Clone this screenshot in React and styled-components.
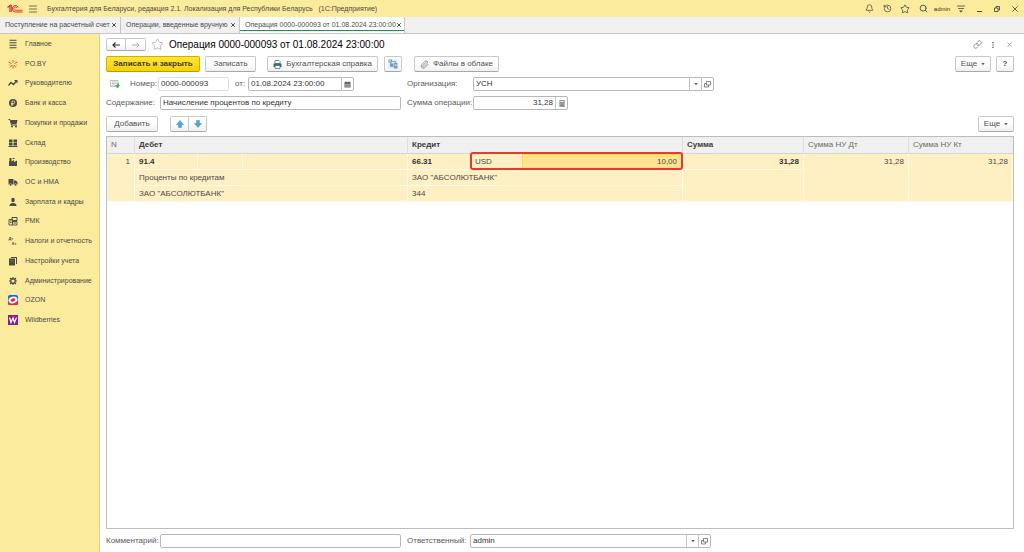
import styled, { createGlobalStyle } from "styled-components"
import { Bell, History, Star, Search, Link, Paperclip, X } from "lucide-react"

const GlobalStyle = createGlobalStyle`
  * {
    box-sizing: border-box;
  }

  body {
    margin: 0;
    background: #ffffff;
    color: #4a4a4a;
    font-family: "Liberation Sans", Arial, sans-serif;
    font-size: 8px;
    line-height: 10px;
  }

  button, input {
    font: inherit;
    color: inherit;
    margin: 0;
  }
`

const Page = styled.div`
  display: flex;
  flex-direction: column;
  min-height: 100vh;
`

const TopBar = styled.header`
  display: flex;
  align-items: center;
  height: 17px;
  padding-left: 7px;
  background: #fbeb9c;
  font-size: 7px;
`

const AppTitle = styled.span`
  flex: 1;
  margin-left: 4px;
  white-space: pre;
`

const IconButton = styled.button`
  display: flex;
  align-items: center;
  justify-content: center;
  width: ${(props) => props.$width || 18}px;
  height: 12px;
  padding: 0;
  border: 0;
  background: none;
  color: ${(props) => props.$color || "#4a4a4a"};
`

const UserLink = styled.a`
  width: 20px;
  color: #333333;
  font-size: 6px;
  text-align: center;
  text-decoration: none;
`

const Tabs = styled.nav`
  display: flex;
  height: 17px;
  background: #f0f0f0;
  border-bottom: 1px solid #c6c6c6;
  font-size: 7px;
`

const Tab = styled.div`
  display: flex;
  align-items: center;
  justify-content: space-between;
  width: ${(props) => props.$width}px;
  padding: 0 2px 0 5px;
  border-right: 1px solid #c6c6c6;
  background: ${(props) => (props.$active ? "#ffffff" : "transparent")};
  box-shadow: ${(props) => (props.$active ? "inset 0 -2px #ffffff, inset 0 -3px #0c9a50" : "none")};
  white-space: nowrap;
`

const TabLink = styled.a`
  color: inherit;
  text-decoration: none;
`

const Body = styled.div`
  display: flex;
  flex: 1;
`

const Sidebar = styled.nav`
  width: 100px;
  background: #fbeb9c;
  border-right: 1px solid #dccf8c;
`

const Menu = styled.ul`
  display: grid;
  grid-auto-rows: 1fr;
  height: 296px;
  margin: 0;
  padding: 0;
  list-style: none;
`

const MenuLink = styled.a`
  display: flex;
  align-items: center;
  gap: 7px;
  height: 100%;
  padding-left: 8px;
  color: #4a4a4a;
  font-size: 7px;
  text-decoration: none;
  white-space: nowrap;

  svg {
    width: 10px;
    height: 10px;
  }
`

const Main = styled.main`
  display: flex;
  flex: 1;
  flex-direction: column;
  min-width: 0;
  padding: 4px 10px 4px 6px;
`

const Row = styled.div`
  display: flex;
  align-items: center;
  gap: ${(props) => props.$gap || 0}px;
  margin-bottom: ${(props) => props.$bottom || 0}px;
`

const Spacer = styled.div`
  flex: 1;
`

const Heading = styled.h1`
  margin: 0;
  color: #000000;
  font-size: 10px;
  font-weight: normal;
  line-height: 13px;
`

const Button = styled.button`
  display: flex;
  align-items: center;
  justify-content: center;
  gap: 4px;
  width: ${(props) => props.$width}px;
  height: ${(props) => props.$height || 16}px;
  padding: 0;
  border: 1px solid ${(props) => (props.$primary ? "#d0b000" : "#c8c8c8")};
  border-bottom-color: ${(props) => (props.$primary ? "#b89c00" : "#a8a8a8")};
  border-radius: 2px;
  background: ${(props) =>
    props.$primary ? "linear-gradient(#ffe43c, #f6d200)" : "linear-gradient(#ffffff 40%, #f0f0f0)"};
  color: ${(props) => (props.$primary ? "#3c3c3c" : "#505050")};
  font-weight: ${(props) => (props.$primary ? "bold" : "normal")};
  white-space: nowrap;
`

const ButtonPair = styled.div`
  display: flex;

  button:first-child {
    border-radius: 2px 0 0 2px;
  }

  button:last-child {
    margin-left: -1px;
    border-radius: 0 2px 2px 0;
  }
`

const FormRow = styled.div`
  display: grid;
  grid-template-columns: 295px 1fr;
  column-gap: 6px;
  margin-bottom: ${(props) => props.$bottom || 0}px;
`

const FormCell = styled.div`
  display: flex;
  align-items: center;
`

const Status = styled.span`
  display: flex;
  width: 24px;
  padding-left: 4px;
`

const Label = styled.label`
  width: ${(props) => props.$width}px;
  padding-left: ${(props) => props.$indent || 0}px;
  color: #5a5a5a;
  white-space: nowrap;
`

const Field = styled.div`
  display: flex;
  width: ${(props) => props.$width}px;
  height: 14px;
  border: 1px solid ${(props) => (props.$light ? "#dddddd" : "#b8b8b8")};
  border-radius: 2px;
  background: #ffffff;
`

const Input = styled.input`
  flex: 1;
  min-width: 0;
  padding: 0 2px;
  border: 0;
  background: none;
  outline: none;
  color: #333333;
  text-align: ${(props) => (props.$right ? "right" : "left")};
`

const FieldButton = styled.button`
  display: flex;
  align-items: center;
  justify-content: center;
  width: 12px;
  padding: 0;
  border: 0;
  border-left: 1px solid #c4c4c4;
  background: none;
`

const TableBox = styled.div`
  flex: 1;
  margin-bottom: 5px;
  border: 1px solid #bdbdbd;
`

const Table = styled.table`
  width: 100%;
  table-layout: fixed;
  border-collapse: separate;
  border-spacing: 0;
`

const HeadCell = styled.th`
  height: 17px;
  padding: 0 4px;
  border-right: 1px solid #dddddd;
  border-bottom: 1px solid #d4d4d4;
  background: #f0f0f0;
  color: ${(props) => (props.$bold ? "#3c3c3c" : "#6a6a6a")};
  font-weight: ${(props) => (props.$bold ? "bold" : "normal")};
  text-align: left;

  &:last-child {
    border-right: 0;
  }
`

const Cell = styled.td`
  height: 16px;
  padding: 0 4px;
  border-right: 1px solid ${(props) => (props.$seamless ? "#fff0c4" : "#fffaeb")};
  border-bottom: 1px solid #fffaeb;
  background: #fff0c4;
  font-weight: ${(props) => (props.$bold ? "bold" : "normal")};
  text-align: ${(props) => (props.$right ? "right" : "left")};
  vertical-align: ${(props) => (props.$top ? "top" : "middle")};
  line-height: ${(props) => (props.$top ? 16 : 10)}px;
  color: ${(props) => (props.$bold ? "#333333" : "#4a4a4a")};
`

const AmountCell = styled(Cell)`
  position: relative;
  padding: 0;
`

const Amount = styled.div`
  display: flex;
  height: 15px;
`

const Currency = styled.span`
  width: 51px;
  padding: 3px 4px;
`

const AmountInput = styled(Input)`
  padding: 0 4px;
  border: 1px solid #ffdf28;
  background: #ffe390;
  color: #4a4a4a;
`

const RedFrame = styled.div`
  position: absolute;
  inset: -2px -1px -1px -1px;
  border: 2px solid #e53935;
  border-radius: 3px;
  pointer-events: none;
`

const Caret = () => (
  <svg width="4" height="3" viewBox="0 0 4 3"><path d="M.3 0h3.400L2 2.300z" fill="#5a5a5a" /></svg>
)

const OpenIcon = () => (
  <svg width="7" height="7" viewBox="0 0 14 14" fill="none" stroke="#6a6a6a" strokeWidth="1.6">
    <path d="M5 1h8v7H5zM5 5H1v7h8V8" />
  </svg>
)

const CalendarIcon = () => (
  <svg width="7" height="7" viewBox="0 0 14 14">
    <path d="M1 2h12v11H1z" fill="#666666" />
    <path d="M3 6h8v5H3z" fill="#dddddd" />
    <path d="M4 0v3M10 0v3M3 8.5h8M5.7 6v5M8.3 6v5" stroke="#666666" strokeWidth="1.2" />
  </svg>
)

const CalcIcon = () => (
  <svg width="6" height="7" viewBox="0 0 14 16">
    <path d="M1 0h12v16H1z" fill="#808080" />
    <path d="M3 2h8v3H3z" fill="#eeeeee" />
    <path d="M3 8h8M3 11h8M3 14h8" stroke="#cccccc" strokeWidth="1.4" strokeDasharray="2 1" />
  </svg>
)

const Logo = () => (
  <svg width="16" height="9" viewBox="0 0 32 18" fill="none" stroke="#d9302c">
    <path d="M1 7l5-4v13" strokeWidth="2.600" />
    <path d="M6 4l3-2v14" strokeWidth="1.600" />
    <path d="M23 7a6.500 6.500 0 1 0-6 9h14" strokeWidth="2" />
    <path d="M20 8a3.400 3.400 0 1 0-3 4.500h14" strokeWidth="1.800" />
  </svg>
)

const BurgerIcon = () => (
  <svg width="8" height="8" viewBox="0 0 8 8"><path d="M0 1h8M0 4h8M0 7h8" stroke="#5a5636" strokeWidth=".8" /></svg>
)

const SettingsIcon = () => (
  <svg width="8" height="8" viewBox="0 0 16 16">
    <path d="M0 2h16M2 7h12" stroke="#4a4a4a" strokeWidth="1.6" />
    <path d="M4 11h8l-4 4z" fill="#4a4a4a" />
  </svg>
)

const MinimizeIcon = () => (
  <svg width="5" height="8" viewBox="0 0 5 8"><path d="M0 6.5h5" stroke="#4a4a4a" /></svg>
)

const RestoreIcon = () => (
  <svg width="6" height="6" viewBox="0 0 12 12" fill="none" stroke="#4a4a4a" strokeWidth="1.8">
    <path d="M1 4h7v7H1zM4 4V1h7v7H8" />
  </svg>
)

const DotsIcon = () => (
  <svg width="2" height="6" viewBox="0 0 2 6"><path d="M.3 0h1.400v1.200H.3zM.3 2.400h1.400v1.200H.3zM.3 4.800h1.400V6H.3z" fill="#555555" /></svg>
)

const HistoryArrow = ({ back }) => (
  <svg width="8" height="6" viewBox="0 0 16 12" fill="none" stroke={back ? "#333333" : "#999999"} strokeWidth={back ? 2.4 : 1.6}>
    {back ? <path d="M7 1L2 6l5 5M2 6h14" /> : <path d="M9 1l5 5-5 5M14 6H0" />}
  </svg>
)

const BlueArrow = ({ down }) => (
  <svg width="8" height="8" viewBox="0 0 16 16">
    <path
      d={down ? "M5 1h6v6h4l-7 8-7-8h4z" : "M5 15h6V9h4L8 1 1 9h4z"}
      fill="#4fa5e2"
      stroke="#3d8ecb"
    />
  </svg>
)

const PrinterIcon = () => (
  <svg width="9" height="9" viewBox="0 0 18 18">
    <path d="M4 1h8l2 2v4H4z" fill="#ffffff" stroke="#4d6d8c" strokeWidth="1.6" />
    <path d="M1 7h16v7H1z" fill="#41627f" />
    <path d="M4 11h10v6H4z" fill="#ffffff" stroke="#41627f" strokeWidth="1.4" />
  </svg>
)

const StructureIcon = () => (
  <svg width="10" height="10" viewBox="0 0 20 20">
    <path d="M1 1h18v18H1z" fill="#dbe9f5" />
    <path d="M5 6v9h9M8 5h7v4" fill="none" stroke="#6f9cc3" strokeWidth="1.6" />
    <path d="M1 1h7v6H1zM12 8h7v5h-7zM12 14h7v5h-7zM5 9h6v5H5z" fill="#6f9cc3" />
    <path d="M3 3h3v2H3zM14 10h3v1h-3z" fill="#ffffff" />
  </svg>
)

const PostedIcon = () => (
  <svg width="10" height="9" viewBox="0 0 20 18">
    <path d="M1 1h15v12H1z" fill="#f2f2f2" stroke="#a8a8a8" strokeWidth="1.4" />
    <path d="M4 4h9M4 7h9M4 10h6" stroke="#b0b0b0" strokeWidth="1.2" />
    <path d="M10 10h4V7h4v3h2l-4 6h-2z" fill="#4fae62" />
  </svg>
)

const dark = "#4a4a4a"

const menu = [
  { title: "Главное", icon: <path d="M3 2.500h14M3 7.500h14M3 12.500h14M3 17.500h14" stroke={dark} strokeWidth="2.400" /> },
  {
    title: "PO.BY",
    icon: (
      <>
        <path d="M10 2v5M10 13v6M1 6l6 3M19 6l-6 3M4 17l4-5M16 17l-4-5" stroke="#dc4b33" strokeWidth="1.800" />
        <path d="M4 3l2 2M16 3l-2 2M1 12h4M15 12h4" stroke="#e8803c" strokeWidth="1.400" />
      </>
    ),
  },
  {
    title: "Руководителю",
    icon: (
      <>
        <path d="M1 15l5-6 5 4 6-7" fill="none" stroke={dark} strokeWidth="2.600" />
        <path d="M12 4h7v7z" fill={dark} />
      </>
    ),
  },
  {
    title: "Банк и касса",
    icon: (
      <>
        <circle cx="10" cy="10" r="8" fill={dark} />
        <path d="M8 16V6h3a2.500 2.500 0 0 1 0 5H6M6 13.500h5" fill="none" stroke="#fbeb9c" strokeWidth="1.600" />
      </>
    ),
  },
  {
    title: "Покупки и продажи",
    icon: (
      <>
        <path d="M1 3h3l3 11h11" fill="none" stroke={dark} strokeWidth="2" />
        <path d="M5 4h14l-2 8H7z" fill={dark} />
        <circle cx="8" cy="17" r="2" fill={dark} />
        <circle cx="16" cy="17" r="2" fill={dark} />
      </>
    ),
  },
  { title: "Склад", icon: <path d="M2 3h7v6H2zM11 3h7v6h-7zM2 10h7v5H2zM11 10h7v5h-7zM1 16h18v2H1z" fill={dark} /> },
  { title: "Производство", icon: <path d="M2 18V8h1V2h4v7l5-3v4l6-3v11zM9 2h4v2H9z" fill={dark} /> },
  {
    title: "ОС и НМА",
    icon: (
      <>
        <path d="M1 4h10v11H1zM12 7h4l3 4v4h-7z" fill={dark} />
        <circle cx="5" cy="15.500" r="2.400" fill={dark} stroke="#fbeb9c" />
        <circle cx="15" cy="15.500" r="2.400" fill={dark} stroke="#fbeb9c" />
      </>
    ),
  },
  {
    title: "Зарплата и кадры",
    icon: (
      <>
        <ellipse cx="10" cy="6" rx="3.500" ry="4.500" fill={dark} />
        <path d="M3 18c0-4 2-5 5-6h4c3 1 5 2 5 6z" fill={dark} />
      </>
    ),
  },
  {
    title: "РМК",
    icon: (
      <>
        <path d="M2 7h7v11H2zM9 11h9v7H9z" fill="none" stroke={dark} strokeWidth="1.800" />
        <path d="M8 3h10v6H8z" fill="none" stroke={dark} strokeWidth="2" />
        <path d="M4 10h3M4 13h3M11 14h5" stroke={dark} strokeWidth="1.800" />
      </>
    ),
  },
  {
    title: "Налоги и отчетность",
    icon: (
      <>
        <text x="1" y="8" fontSize="8" fontWeight="bold" fill={dark}>Дт</text>
        <text x="8" y="17" fontSize="8" fontWeight="bold" fill={dark}>Кт</text>
      </>
    ),
  },
  {
    title: "Настройки учета",
    icon: (
      <>
        <path d="M6 2h12v14h-2V4H6z" fill={dark} />
        <path d="M2 5h12v14H2z" fill={dark} />
        <path d="M5 9h6M5 12h6" stroke="#8a8466" strokeWidth="1" />
      </>
    ),
  },
  {
    title: "Администрирование",
    icon: (
      <>
        <circle cx="10" cy="10" r="4.500" fill="none" stroke={dark} strokeWidth="2.600" />
        <path d="M10 2v3M10 15v3M2 10h3M15 10h3M4 4l2 2M16 4l-2 2M4 16l2-2M16 16l-2-2" stroke={dark} strokeWidth="2.400" />
      </>
    ),
  },
  {
    title: "OZON",
    icon: (
      <>
        <rect width="20" height="20" rx="4" fill="#1464e8" />
        <path d="M0 15c7 3 14 1 20-3v5a3 3 0 0 1-3 3H3a3 3 0 0 1-3-3z" fill="#f0243c" />
        <ellipse cx="10" cy="10" rx="9" ry="6.500" fill="#ffffff" transform="rotate(-15 10 10)" />
        <ellipse cx="10" cy="10" rx="5" ry="3" fill="#f0243c" transform="rotate(-15 10 10)" />
      </>
    ),
  },
  {
    title: "Wildberries",
    icon: (
      <>
        <rect width="20" height="20" fill="#8a1b91" />
        <path d="M3 5l3 10 4-9 3 9 4-10" fill="none" stroke="#ffffff" strokeWidth="2.400" />
      </>
    ),
  },
]

const tabs = [
  { title: "Поступление на расчетный счет", width: 121 },
  { title: "Операции, введенные вручную", width: 119 },
  { title: "Операция 0000-000093 от 01.08.2024 23:00:00", width: 165, active: true },
]

const columns = [28, 63, 45, 165, 63, 212, 121, 105, 104]

const App = () => {
  return (
    <Page>
      <GlobalStyle />
      <TopBar>
        <Logo />
        <IconButton $width={20} aria-label="Меню"><BurgerIcon /></IconButton>
        <AppTitle>Бухгалтерия для Беларуси, редакция 2.1. Локализация для Республики Беларусь   (1С:Предприятие)</AppTitle>
        <IconButton aria-label="Уведомления"><Bell size={9} /></IconButton>
        <IconButton aria-label="История"><History size={9} /></IconButton>
        <IconButton aria-label="Избранное"><Star size={10} /></IconButton>
        <IconButton aria-label="Поиск"><Search size={9} strokeWidth={2.4} /></IconButton>
        <UserLink href="#">admin</UserLink>
        <IconButton aria-label="Настройки"><SettingsIcon /></IconButton>
        <IconButton aria-label="Свернуть"><MinimizeIcon /></IconButton>
        <IconButton aria-label="Развернуть"><RestoreIcon /></IconButton>
        <IconButton aria-label="Выход"><X size={10} /></IconButton>
      </TopBar>

      <Tabs>
        {tabs.map((tab) => (
          <Tab key={tab.title} $width={tab.width} $active={tab.active}>
            <TabLink href="#">{tab.title}</TabLink>
            <IconButton $width={8} aria-label="Закрыть вкладку"><X size={6} strokeWidth={4} /></IconButton>
          </Tab>
        ))}
      </Tabs>

      <Body>
        <Sidebar>
          <Menu>
            {menu.map((item) => (
              <li key={item.title}>
                <MenuLink href="#">
                  <svg viewBox="0 0 20 20">{item.icon}</svg>
                  {item.title}
                </MenuLink>
              </li>
            ))}
          </Menu>
        </Sidebar>

        <Main>
          <Row $gap={5} $bottom={5}>
            <ButtonPair>
              <Button $width={20} $height={13} aria-label="Назад"><HistoryArrow back /></Button>
              <Button $width={21} $height={13} aria-label="Вперед"><HistoryArrow /></Button>
            </ButtonPair>
            <IconButton $width={13} $color="#aaaaaa" aria-label="В избранное"><Star size={13} strokeWidth={1.5} /></IconButton>
            <Heading>Операция 0000-000093 от 01.08.2024 23:00:00</Heading>
            <Spacer />
            <Row>
              <IconButton $width={10} $color="#777777" aria-label="Ссылка"><Link size={9} /></IconButton>
              <IconButton $width={22} aria-label="Действия"><DotsIcon /></IconButton>
              <IconButton $width={10} $color="#777777" aria-label="Закрыть"><X size={7} /></IconButton>
            </Row>
          </Row>

          <Row $gap={5} $bottom={5}>
            <Button $width={94} $primary>Записать и закрыть</Button>
            <Button $width={51}>Записать</Button>
            <Row $gap={6}>
              <Spacer />
              <Button $width={111}><PrinterIcon />Бухгалтерская справка</Button>
              <Button $width={18} aria-label="Структура подчиненности"><StructureIcon /></Button>
              <Spacer />
              <Button $width={85}><Paperclip size={9} color="#777777" />Файлы в облаке</Button>
            </Row>
            <Spacer />
            <Button $width={36}>Еще <Caret /></Button>
            <Button $width={18}><b>?</b></Button>
          </Row>

          <FormRow $bottom={5}>
            <FormCell>
              <Status><PostedIcon /></Status>
              <Label htmlFor="number" $width={28}>Номер:</Label>
              <Field $width={71} $light><Input id="number" defaultValue="0000-000093" /></Field>
              <Label htmlFor="date" $width={19} $indent={6}>от:</Label>
              <Field $width={106}>
                <Input id="date" defaultValue="01.08.2024 23:00:00" />
                <FieldButton aria-label="Выбрать дату"><CalendarIcon /></FieldButton>
              </Field>
            </FormCell>
            <FormCell>
              <Label htmlFor="company" $width={66}>Организация:</Label>
              <Field $width={241}>
                <Input id="company" defaultValue="УСН" />
                <FieldButton aria-label="Выбрать"><Caret /></FieldButton>
                <FieldButton aria-label="Открыть"><OpenIcon /></FieldButton>
              </Field>
            </FormCell>
          </FormRow>

          <FormRow $bottom={6}>
            <FormCell>
              <Label htmlFor="content" $width={54}>Содержание:</Label>
              <Field $width={241}><Input id="content" defaultValue="Начисление процентов по кредиту" /></Field>
            </FormCell>
            <FormCell>
              <Label htmlFor="sum" $width={66}>Сумма операции:</Label>
              <Field $width={95}>
                <Input id="sum" defaultValue="31,28" $right />
                <FieldButton aria-label="Калькулятор"><CalcIcon /></FieldButton>
              </Field>
            </FormCell>
          </FormRow>

          <Row $gap={12} $bottom={4}>
            <Button $width={52}>Добавить</Button>
            <ButtonPair>
              <Button $width={19} aria-label="Вверх"><BlueArrow /></Button>
              <Button $width={19} aria-label="Вниз"><BlueArrow down /></Button>
            </ButtonPair>
            <Spacer />
            <Button $width={36}>Еще <Caret /></Button>
          </Row>

          <TableBox>
            <Table>
              <colgroup>
                {columns.map((width, i) => <col key={i} width={width} />)}
              </colgroup>
              <thead>
                <tr>
                  <HeadCell>N</HeadCell>
                  <HeadCell $bold colSpan={3}>Дебет</HeadCell>
                  <HeadCell $bold colSpan={2}>Кредит</HeadCell>
                  <HeadCell $bold>Сумма</HeadCell>
                  <HeadCell>Сумма НУ Дт</HeadCell>
                  <HeadCell>Сумма НУ Кт</HeadCell>
                </tr>
              </thead>
              <tbody>
                <tr>
                  <Cell rowSpan={3} $right $top>1</Cell>
                  <Cell $bold>91.4</Cell>
                  <Cell />
                  <Cell />
                  <Cell $bold $seamless>66.31</Cell>
                  <AmountCell>
                    <Amount>
                      <Currency>USD</Currency>
                      <AmountInput aria-label="Валютная сумма" defaultValue="10,00" $right />
                    </Amount>
                    <RedFrame />
                  </AmountCell>
                  <Cell $bold $right>31,28</Cell>
                  <Cell rowSpan={3} $right $top>31,28</Cell>
                  <Cell rowSpan={3} $right $top>31,28</Cell>
                </tr>
                <tr>
                  <Cell colSpan={3}>Проценты по кредитам</Cell>
                  <Cell colSpan={2}>ЗАО "АБСОЛЮТБАНК"</Cell>
                  <Cell rowSpan={2} />
                </tr>
                <tr>
                  <Cell colSpan={3}>ЗАО "АБСОЛЮТБАНК"</Cell>
                  <Cell colSpan={2}>344</Cell>
                </tr>
              </tbody>
            </Table>
          </TableBox>

          <FormRow>
            <FormCell>
              <Label htmlFor="comment" $width={54}>Комментарий:</Label>
              <Field $width={241}><Input id="comment" /></Field>
            </FormCell>
            <FormCell>
              <Label htmlFor="responsible" $width={63}>Ответственный:</Label>
              <Field $width={241}>
                <Input id="responsible" defaultValue="admin" />
                <FieldButton aria-label="Выбрать"><Caret /></FieldButton>
                <FieldButton aria-label="Открыть"><OpenIcon /></FieldButton>
              </Field>
            </FormCell>
          </FormRow>
        </Main>
      </Body>
    </Page>
  )
}

export default App
